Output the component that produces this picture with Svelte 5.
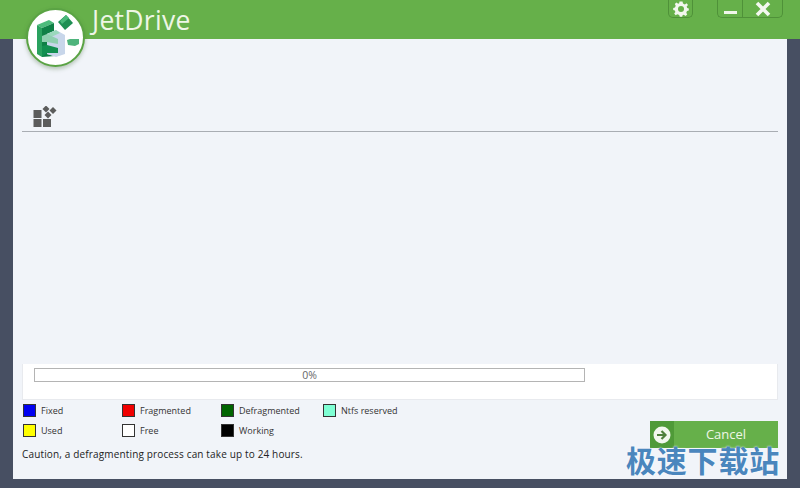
<script lang="ts">
  const legend = [
    { label: 'Fixed', color: '#0000f0' },
    { label: 'Fragmented', color: '#f00000' },
    { label: 'Defragmented', color: '#006400' },
    { label: 'Ntfs reserved', color: '#7fffd4' },
    { label: 'Used', color: '#ffff00' },
    { label: 'Free', color: '#ffffff' },
    { label: 'Working', color: '#000000' }
  ];
  let progress = $state(0);
</script>

<div class="window">
  <header class="titlebar">
    <div class="logo">
      <svg width="54" height="54" viewBox="0 0 54 54">
        <!-- back column of the E -->
        <path d="M8 14 L20 9 L25 12 L13 17 Z" fill="#4dbb7c" />
        <path d="M8 14 L13 17 L13 46 L8 43 Z" fill="#2aa25f" />
        <path d="M13 17 L25 12 L25 20 L18 23 L18 43 L26 45 L13 46 Z" fill="#0f8046" />
        <!-- pale block in front -->
        <path d="M18 23 L27 19 L36 24 L36 43 L27 46 L18 43 Z" fill="#c8d6ea" />
        <path d="M18 23 L27 19 L31 22 L22 26 Z" fill="#9ad8bc" />
        <!-- prongs -->
        <path d="M13 25 L18 23 L29 28 L29 33 L18 31 L13 31 Z" fill="#8fd0b0" />
        <path d="M13 35 L18 34 L29 37 L29 42 L18 42 L13 46 Z" fill="#129050" />
        <!-- loose pieces -->
        <path d="M29 11 L37 4 L44 12 L36 19 Z" fill="#1f8f53" />
        <path d="M31 10 L37 4 L40 7 L33 13 Z" fill="#49b87a" />
        <path d="M38 29 L41 28 L50 28 L50 33 L46 35 L39 34 Z" fill="#4fb47c" />
      </svg>
    </div>
    <h1>JetDrive</h1>
    <div class="controls">
      <button class="ctl gear" aria-label="Settings">
        <svg width="16" height="16" viewBox="0 0 16 16">
          <path d="M6.5 0.5 H9.5 L10 2.6 L11.8 3.4 L13.6 2.3 L15 4 L13.7 5.6 L14.2 7 L15.8 7.5 V9.5 L14 10 L13.3 11.7 L14.2 13.5 L12.5 15 L10.8 13.7 L9.6 14.2 L9.2 15.8 H6.8 L6.2 14 L4.4 13.3 L2.6 14.3 L1.2 12.6 L2.4 11 L1.8 9.6 L0.2 9 V7 L2 6.4 L2.7 4.7 L1.8 3 L3.4 1.5 L5.2 2.7 L6.2 2.2 Z" fill="#f2f7ee" />
          <circle cx="8" cy="8" r="3" fill="#66b04a" />
        </svg>
      </button>
      <div class="pair">
        <button class="ctl min" aria-label="Minimize"><span></span></button>
        <button class="ctl close" aria-label="Close">
          <svg width="16" height="16" viewBox="0 0 16 16">
            <path d="M2 2 L14 14 M14 2 L2 14" stroke="#f4f8f0" stroke-width="3.6" />
          </svg>
        </button>
      </div>
    </div>
  </header>

  <main class="content">
    <div class="toolbar">
      <svg width="24" height="22" viewBox="0 0 24 22" fill="#5c5c5c">
        <rect x="0.5" y="4" width="8" height="8" />
        <rect x="0.5" y="13" width="8" height="8" />
        <rect x="10" y="13" width="8" height="8" />
        <path d="M13 -0.5 L16.5 3 L13 6.5 L9.5 3 Z" />
        <path d="M20 1 L23.5 4.5 L20 8 L16.5 4.5 Z" />
        <path d="M15 5.5 L18.5 9 L15 12.5 L11.5 9 Z" />
      </svg>
    </div>

    <div class="map"></div>

    <section class="panel">
      <div class="bar"><span>{progress}%</span></div>
    </section>

    <div class="bottom">
      <div class="info">
        <div class="legend">
          {#each legend as item}
            <div class="item">
              <i style="background: {item.color}"></i>
              <span>{item.label}</span>
            </div>
          {/each}
        </div>
        <p>Caution, a defragmenting process can take up to 24 hours.</p>
      </div>
      <button class="cancel">
        <span class="arrow">
          <svg width="18" height="18" viewBox="0 0 18 18">
            <circle cx="9" cy="9" r="8.5" fill="#f2f7ee" />
            <path d="M4 9 H12 M8.5 5 L12.5 9 L8.5 13" fill="none" stroke="#4f7f3c" stroke-width="2.2" />
          </svg>
        </span>
        <span class="label">Cancel</span>
      </button>
    </div>
  </main>

  <div class="watermark">极速下载站</div>
</div>

<style>
  :global(body) {
    margin: 0;
    background: #474f62;
  }

  .window {
    position: relative;
    width: 800px;
    height: 488px;
    display: flex;
    flex-direction: column;
    background: #474f62;
    font-family: "Open Sans", "Noto Sans", sans-serif;
    overflow: hidden;
  }

  .titlebar {
    flex: none;
    height: 39px;
    background: #66b04a;
    display: flex;
    align-items: flex-start;
    padding-left: 92px;
    box-sizing: border-box;
  }

  .titlebar h1 {
    margin: 0;
    font: 400 26.5px/41px "Open Sans", sans-serif;
    letter-spacing: 0.3px;
    color: #eef6e6;
  }

  .logo {
    position: absolute;
    left: 26px;
    top: 8px;
    width: 59px;
    height: 59px;
    box-sizing: border-box;
    border-radius: 50%;
    background: #fff;
    border: 2px solid #5aa344;
    box-shadow: 0 2px 4px rgba(60, 100, 50, 0.35);
    display: flex;
    align-items: center;
    justify-content: center;
  }

  .controls {
    margin-left: auto;
    margin-right: 17px;
    display: flex;
    gap: 24px;
  }

  .ctl {
    padding: 0;
    margin: 0;
    background: transparent;
    border: 1px solid #4f9139;
    border-top: none;
    height: 18px;
    display: flex;
    align-items: center;
    justify-content: center;
  }

  .gear {
    width: 25px;
    border-radius: 0 0 5px 5px;
  }

  .pair {
    display: flex;
  }

  .min {
    width: 25px;
    border-radius: 0 0 0 5px;
    border-right: none;
  }

  .min span {
    display: block;
    width: 13px;
    height: 3px;
    margin-top: 7px;
    background: #f0f6ea;
  }

  .close {
    width: 41px;
    border-radius: 0 0 5px 0;
  }

  .content {
    flex: none;
    height: 440px;
    margin: 0 13px;
    padding: 0 9px;
    box-sizing: border-box;
    background: #f1f4f9;
    display: flex;
    flex-direction: column;
  }

  .toolbar {
    flex: none;
    height: 93px;
    box-sizing: border-box;
    padding: 67px 0 0 11px;
    border-bottom: 1px solid #a9adb3;
  }

  .map {
    flex: 1;
  }

  .panel {
    flex: none;
    height: 36px;
    box-sizing: border-box;
    padding: 4px 0 0 11px;
    background: #fff;
    border: 1px solid #e8eaee;
    border-width: 0 1px 1px 1px;
  }

  .bar {
    width: 551px;
    height: 14px;
    box-sizing: border-box;
    border: 1px solid #b4b4b4;
    background: #fff;
    text-align: center;
    font-size: 10.5px;
    line-height: 12px;
    color: #666;
  }

  .bottom {
    flex: none;
    height: 79px;
    display: flex;
    justify-content: space-between;
  }

  .legend {
    display: grid;
    grid-template-columns: 99px 99px 102px 100px;
    grid-auto-rows: 19.5px;
    padding-top: 1px;
    padding-left: 1px;
  }

  .item {
    display: flex;
    align-items: center;
    gap: 5px;
    font-size: 9px;
    color: #333;
  }

  .item i {
    display: block;
    width: 13px;
    height: 13px;
    box-sizing: border-box;
    border: 1px solid #333;
  }

  .info p {
    margin: 7px 0 0;
    font-size: 10px;
    line-height: 14px;
    letter-spacing: 0.15px;
    color: #222;
  }

  .cancel {
    align-self: flex-start;
    margin-top: 21px;
    width: 128px;
    height: 27px;
    padding: 0;
    border: none;
    background: #66b04a;
    display: flex;
    font-family: inherit;
  }

  .arrow {
    flex: none;
    width: 24px;
    background: #4f9a38;
    display: flex;
    align-items: center;
    justify-content: center;
  }

  .label {
    flex: 1;
    color: #eef6e6;
    font-size: 13px;
    line-height: 27px;
    text-align: center;
  }

  .watermark {
    position: absolute;
    left: 626px;
    top: 441px;
    font: 700 30px/36px "Noto Sans CJK SC", sans-serif;
    letter-spacing: 0.8px;
    color: #4a86bd;
    text-shadow: 0 0 2px #fff;
  }
</style>
